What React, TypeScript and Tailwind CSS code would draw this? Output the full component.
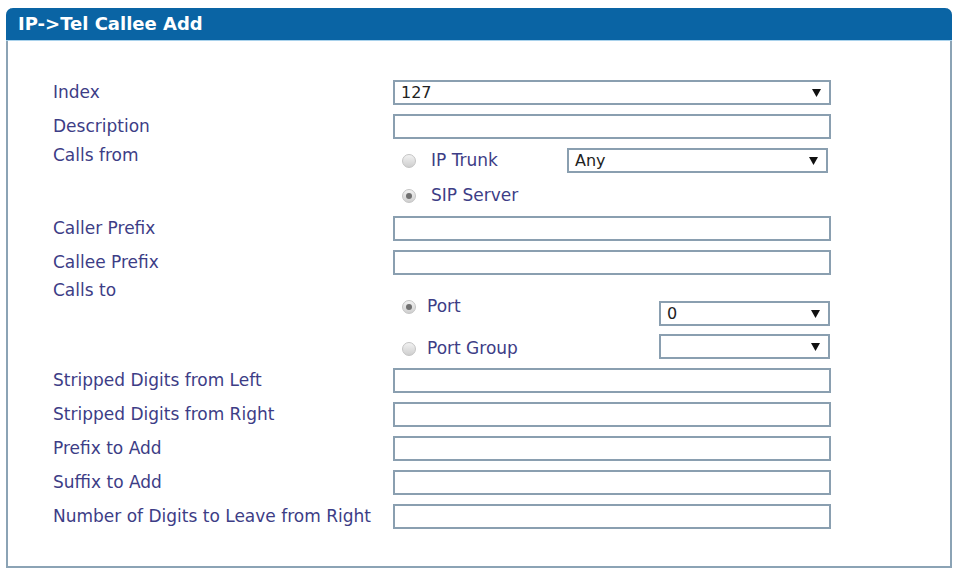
import React from 'react';

const label = "text-[17px] leading-[17px] text-[#3d3d86]";

const Select: React.FC<{ value?: string; className?: string }> = ({ value, className }) => (
  <div className={`h-[25px] border-2 border-[#8a9fb0] bg-white flex items-center justify-between pl-[6px] pr-[8px] ${className ?? ''}`}>
    <span className="text-[16px] text-[#222] leading-none">{value}</span>
    <svg width="9" height="8" viewBox="0 0 9 8">
      <path d="M0 0 H9 L4.5 8 Z" fill="#111" />
    </svg>
  </div>
);

const Input: React.FC = () => <div className="h-[25px] w-[438px] border-2 border-[#8a9fb0] bg-white" />;

const Radio: React.FC<{ checked?: boolean; text: string; gap?: string }> = ({ checked, text, gap }) => (
  <div className={`flex items-center ${gap ?? 'gap-[15px]'}`}>
    <div className="w-[14px] h-[14px] rounded-full border border-[#c4c4c4] bg-gradient-to-b from-[#f2f2f2] to-[#cfcfcf] flex items-center justify-center">
      {checked && <div className="w-[6px] h-[6px] rounded-full bg-[#707070]" />}
    </div>
    <span className={label}>{text}</span>
  </div>
);

const Row: React.FC<{ name: string; children: React.ReactNode }> = ({ name, children }) => (
  <div className="flex items-center h-[25px]">
    <div className={`w-[340px] ${label}`}>{name}</div>
    {children}
  </div>
);

export default function App() {
  return (
    <div className="w-[957px] h-[571px] bg-white pt-[8px] pl-[6px]" style={{ fontFamily: '"DejaVu Sans", sans-serif' }}>
      <div className="w-[946px] h-[560px] border-2 border-t-0 border-[#8ba3b5] rounded-t-[7px] bg-white">
        <div className="h-[33px] -mx-[2px] bg-[#0a64a4] rounded-t-[7px] border-b border-[#a9d2ec] flex items-center pl-[12px]">
          <span className="text-white font-bold text-[18px] leading-none">IP-&gt;Tel Callee Add</span>
        </div>
        <div className="pl-[45px] pt-[39px] flex flex-col gap-[9px]">
          <Row name="Index"><Select value="127" className="w-[438px]" /></Row>
          <Row name="Description"><Input /></Row>

          <div className="flex">
            <div className={`w-[340px] ${label} -mt-[1px]`}>Calls from</div>
            <div className="flex flex-col">
              <div className="h-[25px] flex items-center pl-[9px]">
                <div className="w-[165px]"><Radio text="IP Trunk" /></div>
                <Select value="Any" className="w-[261px]" />
              </div>
              <div className="h-[34px] pt-[14px] pl-[9px]">
                <Radio checked text="SIP Server" />
              </div>
            </div>
          </div>

          <Row name="Caller Prefix"><Input /></Row>
          <Row name="Callee Prefix"><Input /></Row>

          <div className="flex">
            <div className={`w-[340px] ${label} -mt-[2px]`}>Calls to</div>
            <div className="flex">
              <div className="w-[266px] pl-[9px] pt-[14px] flex flex-col gap-[25px]">
                <Radio checked text="Port" gap="gap-[11px]" />
                <Radio text="Port Group" gap="gap-[11px]" />
              </div>
              <div className="pt-[17px] flex flex-col gap-[8px]">
                <Select value="0" className="w-[171px]" />
                <Select className="w-[171px]" />
              </div>
            </div>
          </div>

          <Row name="Stripped Digits from Left"><Input /></Row>
          <Row name="Stripped Digits from Right"><Input /></Row>
          <Row name="Prefix to Add"><Input /></Row>
          <Row name="Suffix to Add"><Input /></Row>
          <Row name="Number of Digits to Leave from Right"><Input /></Row>
        </div>
      </div>
    </div>
  );
}
